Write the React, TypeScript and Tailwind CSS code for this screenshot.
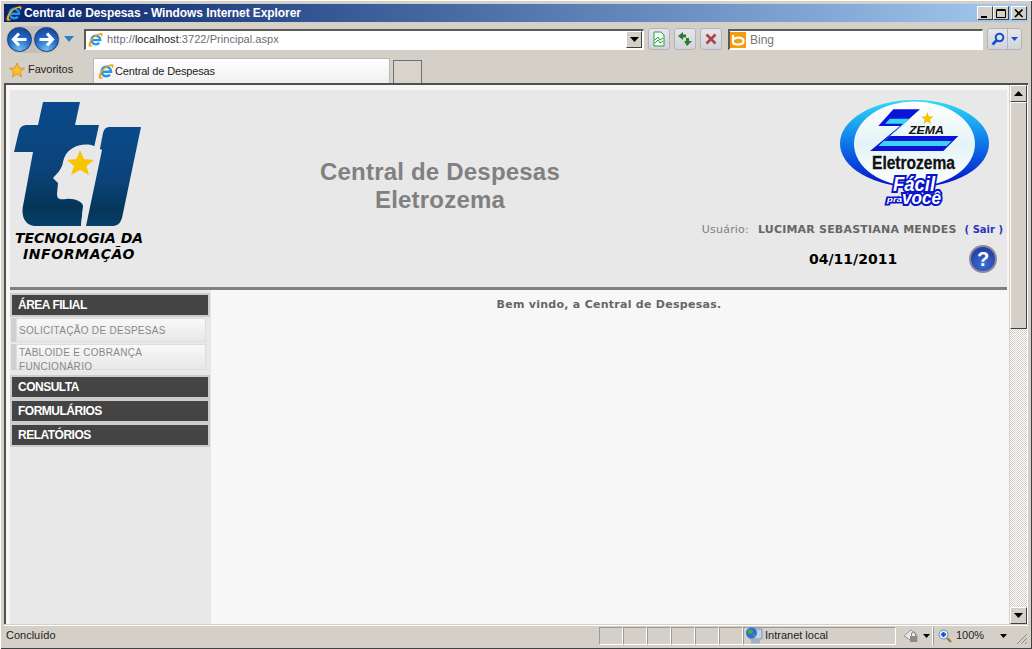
import type { ReactNode } from 'react';

const UI = "font-['Liberation_Sans',Arial,sans-serif]";
const VERDANA = "font-['DejaVu_Sans',Verdana,sans-serif]";

function IeIcon({ size = 16 }: { size?: number }) {
    return (
        <svg width={size} height={size} viewBox="0 0 16 16" className="shrink-0">
            <path d="M4.4 8.7 H13 A4.7 4.7 0 1 0 11.9 11.6" fill="none" stroke="#2296e8" strokeWidth="2.5" />
            <path d="M1 15.4 C-1 12.4 4 5 10 2.2 C13 0.8 15.8 0.6 15.6 2.8 C15.5 3.8 15 4.8 14.2 5.6 C14.4 3.2 13 2.4 10.6 3.4 C6 5.4 2.6 10.4 3 13 C3.2 14.2 4 14.8 5.4 14.4 C3.6 16 1.8 16.2 1 15.4Z" fill="#f0a818" />
        </svg>
    );
}

function NavOrb({ dir }: { dir: 'left' | 'right' }) {
    return (
        <div className="w-[25px] h-[25px] rounded-full border border-[#1c3f78] bg-[radial-gradient(circle_at_50%_95%,#6ec0f4_0%,#2068c8_50%,#123f8c_100%)] flex items-center justify-center">
            <svg width="17" height="15" viewBox="0 0 17 15">
                <path d={dir === 'left' ? 'M8 1.5 L2.5 7.5 L8 13.5 M3 7.5 H15.5' : 'M9 1.5 L14.5 7.5 L9 13.5 M14 7.5 H1.5'} fill="none" stroke="#fff" strokeWidth="3.2" />
            </svg>
        </div>
    );
}

function ToolButton({ children }: { children: ReactNode }) {
    return (
        <div className="w-[22px] h-[22px] rounded-[3px] border border-[#b4b4b8] bg-gradient-to-b from-[#e6e6ea] to-[#d2d4dc] flex items-center justify-center">
            {children}
        </div>
    );
}

function SunkenBox({ className, children }: { className: string; children: ReactNode }) {
    return (
        <div className={`h-[21px] flex items-center bg-white border-t-2 border-l-2 border-b border-r border-t-[#5a5a5a] border-l-[#5a5a5a] border-b-white border-r-white ${className}`}>
            {children}
        </div>
    );
}

function ScrollButton({ up }: { up?: boolean }) {
    return (
        <div className="h-[17px] bg-[#d4d0c8] border border-t-white border-l-white border-r-[#404040] border-b-[#404040] flex items-center justify-center">
            <svg width="9" height="5" viewBox="0 0 9 5">
                <path d={up ? 'M4.5 0 L9 5 H0Z' : 'M0 0 H9 L4.5 5Z'} fill="#000" />
            </svg>
        </div>
    );
}

function TiLogo() {
    return (
        <svg width="132" height="126" viewBox="12 101 132 126" className="block">
            <defs>
                <linearGradient id="ti" x1="0" y1="0" x2="0" y2="1">
                    <stop offset="0" stopColor="#0a4a8c" />
                    <stop offset="0.55" stopColor="#0a4378" />
                    <stop offset="0.85" stopColor="#053658" />
                    <stop offset="1" stopColor="#06406a" />
                </linearGradient>
            </defs>
            <path d="M43 102 H80 L75 125 H99 L93 152 H62 C72 138 84 136 90 146 L81 226 H36 C25 226 21 216 23 206 L33 152 H14 L19 131 C20 127 23 125 27 125 H38Z" fill="url(#ti)" />
            <path d="M109 127 H141 L122 218 C120 224 117 226 112 226 H85 L103 133 C104 129 106 127 109 127Z" fill="url(#ti)" />
            <path d="M94 146 C84 142 66 146 63 162 C62 168 59 172 53 178 L58 183 L57 194 C57 199 60 200 66 199 C74 198 83 202 83 206 L81 226 H86 L102 150Z" fill="#e8e8e8" />
            <path d="M80 150 L84 159 L94 160 L86.5 166 L89 175 L80 170 L71 175 L74 166 L67 160 L76.5 159Z" fill="#f7c600" />
        </svg>
    );
}

function ZemaLogo() {
    return (
        <svg width="152" height="108" viewBox="839 99 152 108" className="block">
            <defs>
                <linearGradient id="ring" x1="0" y1="0" x2="0" y2="1">
                    <stop offset="0" stopColor="#30dcf4" />
                    <stop offset="0.45" stopColor="#1080ec" />
                    <stop offset="1" stopColor="#0410c8" />
                </linearGradient>
                <linearGradient id="inner" x1="0" y1="0" x2="0" y2="1">
                    <stop offset="0" stopColor="#ffffff" />
                    <stop offset="0.5" stopColor="#e4f4f6" />
                    <stop offset="1" stopColor="#ffffff" />
                </linearGradient>
            </defs>
            <ellipse cx="914.5" cy="143.5" rx="74.5" ry="43.5" fill="url(#ring)" />
            <ellipse cx="914.5" cy="144" rx="60.5" ry="42.5" fill="url(#inner)" />
            <path d="M893.3 109.3 H920 L890 136 H958.3 L943.3 151 H870 L900 126 H878.3Z" fill="#0a14d8" />
            <path d="M890 118.7 H910 L884.3 141 H951.7 L946.7 146 H878.3 L903.3 123.7 H885Z" fill="#38d4f0" />
            <path d="M927.3 112 L929 116.4 L933.6 116.6 L930 119.4 L931.2 124 L927.3 121.4 L923.4 124 L924.6 119.4 L921 116.6 L925.6 116.4Z" fill="#f4c400" />
            <text x="909" y="133.5" fontFamily="Liberation Sans, sans-serif" fontWeight="700" fontStyle="italic" fontSize="11" fill="#111" textLength="35" lengthAdjust="spacingAndGlyphs">ZEMA</text>
            <text x="872" y="169" fontFamily="Liberation Sans, sans-serif" fontWeight="700" fontSize="18" fill="#111" stroke="#111" strokeWidth="0.3" textLength="83" lengthAdjust="spacingAndGlyphs">Eletrozema</text>
            <text x="893" y="191" fontFamily="Liberation Sans, sans-serif" fontWeight="700" fontStyle="italic" fontSize="20" fill="#fff" stroke="#0a14c8" strokeWidth="4" paintOrder="stroke" textLength="42" lengthAdjust="spacingAndGlyphs">Fácil</text>
            <text x="887" y="202" fontFamily="Liberation Sans, sans-serif" fontWeight="700" fontStyle="italic" fontSize="7" fill="#fff" stroke="#0a14c8" strokeWidth="3" paintOrder="stroke" textLength="15" lengthAdjust="spacingAndGlyphs">pra</text>
            <text x="902" y="204" fontFamily="Liberation Sans, sans-serif" fontWeight="700" fontStyle="italic" fontSize="18" fill="#fff" stroke="#0a14c8" strokeWidth="4" paintOrder="stroke" textLength="39" lengthAdjust="spacingAndGlyphs">você</text>
        </svg>
    );
}

function MenuBar({ label }: { label: string }) {
    return (
        <div className={`h-5 bg-[#444444] pl-1.5 flex items-center text-xs font-bold tracking-[-0.5px] text-white ${UI}`}>{label}</div>
    );
}

function SubItem({ children, className }: { children: ReactNode; className: string }) {
    return (
        <div className={`flex ml-px w-[195px] overflow-hidden ${className}`}>
            <div className="w-[5px] bg-[#d0d0d0] shrink-0" />
            <div className="flex-1 pl-0.5 border border-[#dddddd] bg-gradient-to-b from-[#f8f8f8] to-[#e8e8e8] text-[10px] leading-[14px] tracking-[0.3px] text-[#888888]">
                {children}
            </div>
        </div>
    );
}

export default function App() {
    return (
        <div className={`w-[1032px] h-[649px] overflow-hidden flex flex-col bg-[#d4d0c8] p-1 shadow-[inset_1px_1px_0_#ffffff,inset_-1px_-1px_0_#404040] ${UI}`}>
            {/* title bar */}
            <div className="h-[18px] shrink-0 flex items-center justify-between pl-0.5 pr-px bg-gradient-to-r from-[#0a246a] to-[#a6caf0]">
                <div className="flex items-center gap-0.5">
                    <IeIcon />
                    <span className="text-xs font-bold tracking-[-0.08px] text-white">Central de Despesas - Windows Internet Explorer</span>
                </div>
                <div className="flex">
                    {['min', 'max', 'close'].map((b) => (
                        <div key={b} className={`w-4 h-[14px] bg-[#d4d0c8] border border-t-white border-l-white border-r-[#404040] border-b-[#404040] flex items-center justify-center ${b === 'close' ? 'ml-0.5' : ''}`}>
                            <svg width="10" height="9" viewBox="0 0 10 9">
                                {b === 'min' && <rect x="1" y="7" width="6" height="2" fill="#000" />}
                                {b === 'max' && <path d="M0.5 1.5 H9.5 V8.5 H0.5Z M0.5 0.5 H9.5" fill="none" stroke="#000" />}
                                {b === 'close' && <path d="M1 0.5 L8.5 8 M8.5 0.5 L1 8" stroke="#000" strokeWidth="1.6" />}
                            </svg>
                        </div>
                    ))}
                </div>
            </div>

            {/* toolbar */}
            <div className="h-[34px] shrink-0 flex items-center pl-[2px]">
                <div className="flex items-center gap-[2px] rounded-full bg-[#c2bfba] p-px">
                    <NavOrb dir="left" />
                    <NavOrb dir="right" />
                </div>
                <svg width="10" height="6" viewBox="0 0 10 6" className="ml-1">
                    <path d="M0 0 H10 L5 6Z" fill="#2f80c0" />
                </svg>
                <SunkenBox className="ml-[10px] w-[560px] text-[11px] text-[#6d6d78]">
                    <span className="ml-0.5"><IeIcon size={15} /></span>
                    <span className="ml-1 tracking-[0.05px]">http://<span className="text-[#222]">localhost</span>:3722/Principal.aspx</span>
                    <div className="ml-auto mr-px w-4 h-[17px] bg-[#d4d0c8] border border-t-white border-l-white border-r-[#404040] border-b-[#404040] flex items-center justify-center">
                        <svg width="9" height="5" viewBox="0 0 9 5"><path d="M0 0 H9 L4.5 5Z" fill="#000" /></svg>
                    </div>
                </SunkenBox>
                <div className="ml-1 flex gap-1">
                    <ToolButton>
                        <svg width="14" height="16" viewBox="0 0 14 16">
                            <path d="M2 1 H9 L12 4 V15 H2Z" fill="#f4fff4" stroke="#2a9a4a" />
                            <path d="M3 9 L6 6 L8 9 L11 7 M3 12 L6 9 L8 12 L11 10" fill="none" stroke="#2a9a4a" />
                        </svg>
                    </ToolButton>
                    <ToolButton>
                        <svg width="16" height="16" viewBox="0 0 16 16">
                            <path d="M1 5 L6 1 V3.5 H9 V6.5 H6 V9Z" fill="#2e7d2e" />
                            <path d="M15 10 L10 15 L7 10 H9 V7 H12 V10Z" fill="#2e7d2e" />
                        </svg>
                    </ToolButton>
                    <ToolButton>
                        <svg width="12" height="12" viewBox="0 0 12 12">
                            <path d="M1.5 1.5 L10.5 10.5 M10.5 1.5 L1.5 10.5" stroke="#b04048" strokeWidth="2.6" />
                        </svg>
                    </ToolButton>
                </div>
                <SunkenBox className="ml-1.5 w-[255px] text-[11px] text-[#777]">
                    <div className="w-4 h-4 bg-[#f59c10] flex items-center justify-center shrink-0">
                        <svg width="14" height="12" viewBox="0 0 14 12">
                            <path d="M2 1 V8 C2 10 4 10.5 7 10.5 C10 10.5 12.5 9.5 12.5 7 C12.5 4.5 10 3.6 7 3.6 C5.6 3.6 4 4 2 5.4" fill="none" stroke="#fff" strokeWidth="2.2" />
                        </svg>
                    </div>
                    <span className="ml-1 text-xs">Bing</span>
                </SunkenBox>
                <div className="ml-1 flex h-[22px] rounded-[3px] border border-[#b4b4b8] bg-gradient-to-b from-[#e6e6ea] to-[#d2d4dc]">
                    <div className="w-[20px] flex items-center justify-center border-r border-[#b4b4b8]">
                        <svg width="14" height="14" viewBox="0 0 14 14">
                            <circle cx="8.5" cy="5.5" r="3.8" fill="none" stroke="#1050d0" strokeWidth="2" />
                            <path d="M6 8 L1.5 12.5" stroke="#1050d0" strokeWidth="2.6" />
                        </svg>
                    </div>
                    <div className="w-[13px] flex items-center justify-center">
                        <svg width="7" height="4" viewBox="0 0 7 4"><path d="M0 0 H7 L3.5 4Z" fill="#1050d0" /></svg>
                    </div>
                </div>
            </div>

            {/* favorites + tabs */}
            <div className="h-[27px] shrink-0 flex items-end pl-[5px]">
                <div className="h-full flex items-center gap-[3px] w-[84px] text-[11px] text-[#222]">
                    <svg width="16" height="16" viewBox="0 0 16 16">
                        <path d="M8 1 L10 6 L15.5 6.3 L11.2 9.7 L12.7 15 L8 12 L3.3 15 L4.8 9.7 L0.5 6.3 L6 6Z" fill="#fbc02d" stroke="#c88a10" strokeWidth="0.7" />
                    </svg>
                    Favoritos
                </div>
                <div className="w-[297px] h-[25px] bg-gradient-to-b from-white to-[#f0f0f0] border-t border-x border-[#b8b8b8] flex items-center pl-[4px] gap-px text-[11px] tracking-[-0.15px] text-[#222]">
                    <IeIcon />
                    Central de Despesas
                </div>
                <div className="ml-[3px] w-[29px] h-[23px] bg-[#d8d4cc] border-t border-x border-[#707070]" />
            </div>

            {/* page */}
            <div className="h-[541px] shrink-0 flex border-t-2 border-l-2 border-[#505050] bg-white">
                <div className="w-[1003px] shrink-0 flex flex-col pl-1 pr-0.5 pt-[5px] bg-[#f7f7f7]">
                    {/* page header */}
                    <div className="h-[197px] shrink-0 bg-[#e8e8e8] flex">
                        <div className="w-[150px] shrink-0 pl-0.5 pt-[11px]">
                            <TiLogo />
                            <div className={`w-[134px] pt-[3px] text-center text-[14px] leading-4 font-bold italic text-black ${VERDANA}`}>
                                TECNOLOGIA DA<br /><span className="tracking-[0.6px]">INFORMAÇÃO</span>
                            </div>
                        </div>
                        <div className="w-[530px] shrink-0 pt-[68px] pl-[30px] text-center text-2xl leading-[28px] font-bold tracking-[0.2px] text-[#808080]">
                            Central de Despesas<br />Eletrozema
                        </div>
                        <div className="flex-1 flex flex-col items-end pr-1">
                            <div className="mt-[9px] mr-[12px]"><ZemaLogo /></div>
                            <div className={`mt-[15px] flex items-baseline whitespace-nowrap text-[11px] leading-4 ${VERDANA}`}>
                                <span className="tracking-[0.2px] text-[#808080]">Usuário:</span>
                                <span className="ml-[9px] font-bold tracking-[0.2px] text-[#666]">LUCIMAR SEBASTIANA MENDES</span>
                                <span className="ml-2 font-bold text-[10px] text-[#2a35c0]">( Sair )</span>
                            </div>
                            <div className="w-full mt-[7px] flex items-center">
                                <span className={`ml-[119px] text-[14px] font-bold text-black ${VERDANA}`}>04/11/2011</span>
                                <div className="ml-auto mr-[6px] w-7 h-7 rounded-full border-2 border-[#8a8a9a] bg-[radial-gradient(circle_at_50%_70%,#3c70d8_0%,#1a2f90_100%)] flex items-center justify-center text-xl font-bold text-white">?</div>
                            </div>
                        </div>
                    </div>
                    <div className="h-[3px] shrink-0 bg-[#808080]" />
                    <div className="flex-1 flex min-h-0">
                        {/* side menu */}
                        <div className="w-[201px] shrink-0 bg-[#e8e8e8] pt-[3px]">
                            <div className="w-[200px] bg-[#cccccc] p-0.5"><MenuBar label="ÁREA FILIAL" /></div>
                            <SubItem className="mt-px h-[24px] [&>div:last-child]:pt-[5px]">SOLICITAÇÃO DE DESPESAS</SubItem>
                            <SubItem className="mt-0.5 h-[26px] [&>div:last-child]:pt-px">TABLOIDE E COBRANÇA FUNCIONÁRIO</SubItem>
                            <div className="mt-[5px] w-[200px] bg-[#cccccc] p-0.5 flex flex-col gap-1">
                                <MenuBar label="CONSULTA" />
                                <MenuBar label="FORMULÁRIOS" />
                                <MenuBar label="RELATÓRIOS" />
                            </div>
                        </div>
                        <div className={`flex-1 pt-[7px] text-center text-[11px] font-bold tracking-[0.27px] text-[#666] ${VERDANA}`}>
                            Bem vindo, a Central de Despesas.
                        </div>
                    </div>
                </div>
                {/* scrollbar */}
                <div className="w-[18px] shrink-0 flex flex-col bg-[conic-gradient(#d4d0c8_25%,#ffffff_0_50%,#d4d0c8_0_75%,#ffffff_0)] bg-[length:2px_2px] border-l border-[#d4d0c8]">
                    <ScrollButton up />
                    <div className="h-[227px] bg-[#d4d0c8] border border-t-white border-l-white border-r-[#404040] border-b-[#404040]" />
                    <div className="flex-1" />
                    <ScrollButton />
                </div>
            </div>

            {/* status bar */}
            <div className="flex-1 mt-px border-t border-white flex items-center text-[11px] text-[#222]">
                <span className="w-[595px] shrink-0 pl-0.5">Concluído</span>
                {[0, 1, 2, 3, 4, 5].map((n) => (
                    <div key={n} className="w-6 h-[18px] shrink-0 border border-t-[#9a9a9a] border-l-[#9a9a9a] border-r-white border-b-white" />
                ))}
                <div className="w-[153px] h-[18px] shrink-0 flex items-center gap-0.5 border border-t-[#9a9a9a] border-l-[#9a9a9a] border-r-white border-b-white pl-px">
                    <svg width="18" height="17" viewBox="0 0 18 17">
                        <rect x="5" y="2" width="12" height="10" rx="1" fill="#bcd4f0" stroke="#8090b0" />
                        <circle cx="6.5" cy="6" r="5.5" fill="#2f6fd0" />
                        <path d="M3 2.5 L8 3 L7 7 L3 6Z M8.5 7 L11 8 L8.5 11Z" fill="#3fae48" />
                        <rect x="6" y="13" width="9" height="3.5" fill="#a4aec4" />
                    </svg>
                    Intranet local
                </div>
                <div className="ml-1 w-[33px] h-[18px] shrink-0 flex items-center gap-1 border-r border-white pl-[3px]">
                    <svg width="16" height="16" viewBox="0 0 16 16">
                        <path d="M1 8 L8 2 L14 7 V13 H8 L6 11Z" fill="#e8e8e8" stroke="#9a9a9a" />
                        <rect x="7" y="8" width="7" height="6" fill="#8a8a8a" />
                        <path d="M8.5 8 V6 A2 2 0 0 1 12.5 6 V8" fill="none" stroke="#8a8a8a" />
                    </svg>
                    <svg width="7" height="4" viewBox="0 0 7 4"><path d="M0 0 H7 L3.5 4Z" fill="#000" /></svg>
                </div>
                <div className="flex-1 h-[18px] flex items-center border-l border-[#9a9a9a] pl-1">
                    <svg width="14" height="14" viewBox="0 0 14 14">
                        <circle cx="5.5" cy="5.5" r="4.5" fill="#e4eefc" stroke="#6a8ac0" />
                        <path d="M3 5.5 H8 M5.5 3 V8" stroke="#1050c8" strokeWidth="2" />
                        <path d="M9 9 L13 13" stroke="#a07840" strokeWidth="2.4" />
                    </svg>
                    <span className="ml-1">100%</span>
                    <svg width="7" height="4" viewBox="0 0 7 4" className="ml-4"><path d="M0 0 H7 L3.5 4Z" fill="#000" /></svg>
                    <svg width="12" height="12" viewBox="0 0 12 12" className="ml-auto self-end">
                        <path d="M11 1 L1 11 M11 5 L5 11 M11 9 L9 11" stroke="#8a8a8a" />
                    </svg>
                </div>
            </div>
        </div>
    );
}
